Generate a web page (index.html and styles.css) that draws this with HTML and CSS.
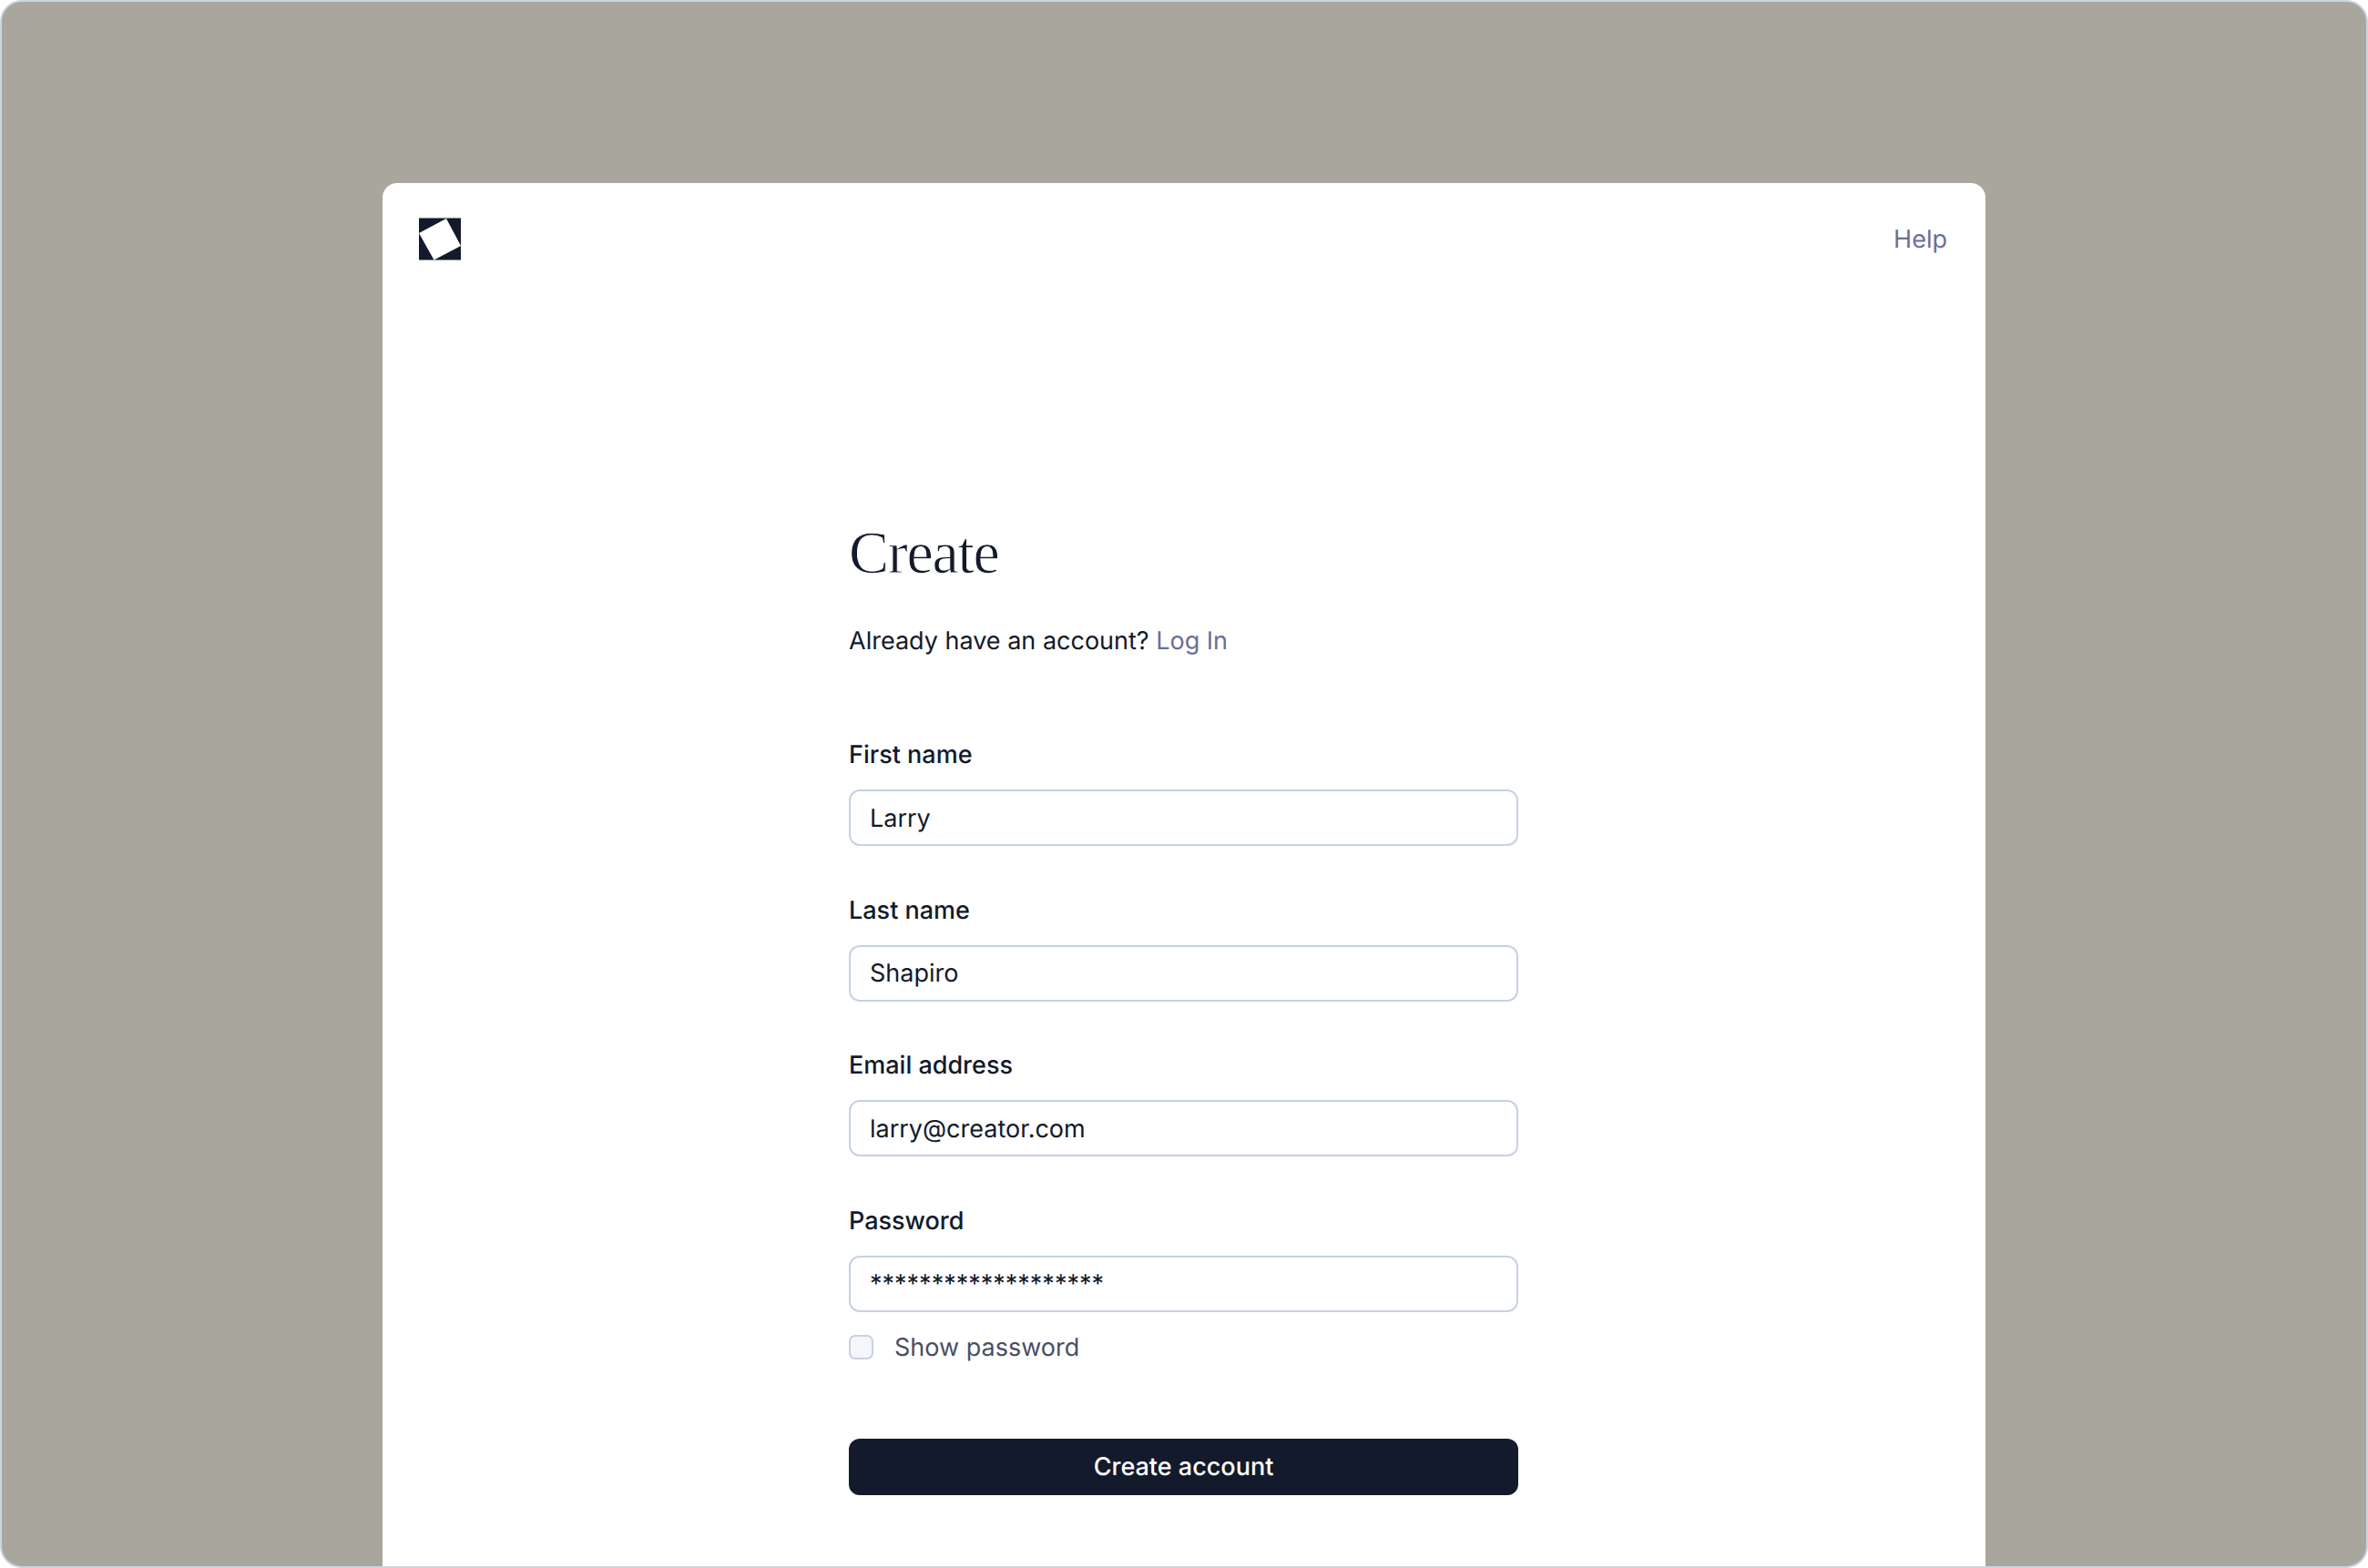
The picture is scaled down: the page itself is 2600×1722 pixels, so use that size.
FILE: index.html
```html
<!DOCTYPE html>
<html lang="en">
<head>
<meta charset="utf-8">
<title>Create account</title>
<link rel="stylesheet" href="styles.css">
</head>
<body>
<div class="frame">
  <main class="card">
    <header class="top">
      <svg class="logo" viewBox="0 0 46 46" aria-label="Logo"><rect width="46" height="46" fill="#131a2b"/><polygon points="30,0.5 46,30.5 16.5,46 0,16.5" fill="#fff"/></svg>
      <a class="help" href="#">Help</a>
    </header>
    <form class="form">
      <h1 class="title">Create</h1>
      <p class="lead">Already have an account? <a class="link" href="#">Log In</a></p>
      <div class="fields">
        <div class="field"><label class="label">First name</label><input class="input" value="Larry"></div>
        <div class="field"><label class="label">Last name</label><input class="input" value="Shapiro"></div>
        <div class="field"><label class="label">Email address</label><input class="input" value="larry@creator.com"></div>
        <div class="field"><label class="label">Password</label><input class="input" value="*******************"></div>
      </div>
      <label class="show"><span class="box"></span><span>Show password</span></label>
      <button class="submit" type="button">Create account</button>
    </form>
  </main>
</div>
</body>
</html>
```
FILE: styles.css
```css
* { box-sizing: border-box; }
html, body { margin: 0; padding: 0; background: #fff; }
body { font-family: Inter, "Liberation Sans", sans-serif; color: #131a2b; text-rendering: geometricPrecision; }
.frame {
  height: 1722px;
  padding-top: 199px;
  background: #a9a79d;
  border: 2px solid #cbd5e1;
  border-radius: 24px;
  overflow: hidden;
}
.card {
  width: 1760px;
  height: 1521px;
  margin-left: 418px;
  background: #fff;
  border-radius: 16px 16px 0 0;
}
.top {
  display: flex;
  justify-content: space-between;
  align-items: center;
  padding: 38px 42px 0 40px;
}
.logo { width: 46px; height: 47px; display: block; }
.help { font-size: 27px; line-height: 47px; color: #6b6f93; text-decoration: none; }
.form { width: 735px; margin-left: 512px; padding-top: 282px; }
.title {
  margin: 0;
  font: 400 66px/80px "Liberation Serif", serif;
  letter-spacing: -1.3px;
  color: #131a2b;
  -webkit-text-stroke: 0.9px #fff;
  paint-order: fill stroke;
}
.lead { margin: 36px 0 0; font-size: 27px; line-height: 40px; }
.link { color: #6b6f93; text-decoration: none; }
.fields { display: flex; flex-direction: column; gap: 50.6px; margin-top: 85px; }
.field { display: flex; flex-direction: column; gap: 18px; }
.label { font-size: 27px; line-height: 40px; font-weight: 500; }
.input {
  width: 100%;
  height: 62px;
  padding: 0 21px;
  font: 400 27px Inter, sans-serif;
  text-rendering: geometricPrecision;
  color: #131a2b;
  background: #fff;
  border: 2.5px solid #c6d1e3;
  border-radius: 12px;
  outline: none;
}
.show { display: flex; align-items: center; gap: 23px; margin-top: 19px; font-size: 27px; line-height: 40px; color: #4a4f63; }
.box { width: 27px; height: 27px; background: #f4f6fa; border: 2.5px solid #c6d1e3; border-radius: 7px; }
.submit {
  display: block;
  width: 100%;
  height: 62px;
  margin-top: 80px;
  font: 500 27px Inter, sans-serif;
  text-rendering: geometricPrecision;
  color: #fff;
  background: #131a2b;
  border: 0;
  border-radius: 12px;
}
```
